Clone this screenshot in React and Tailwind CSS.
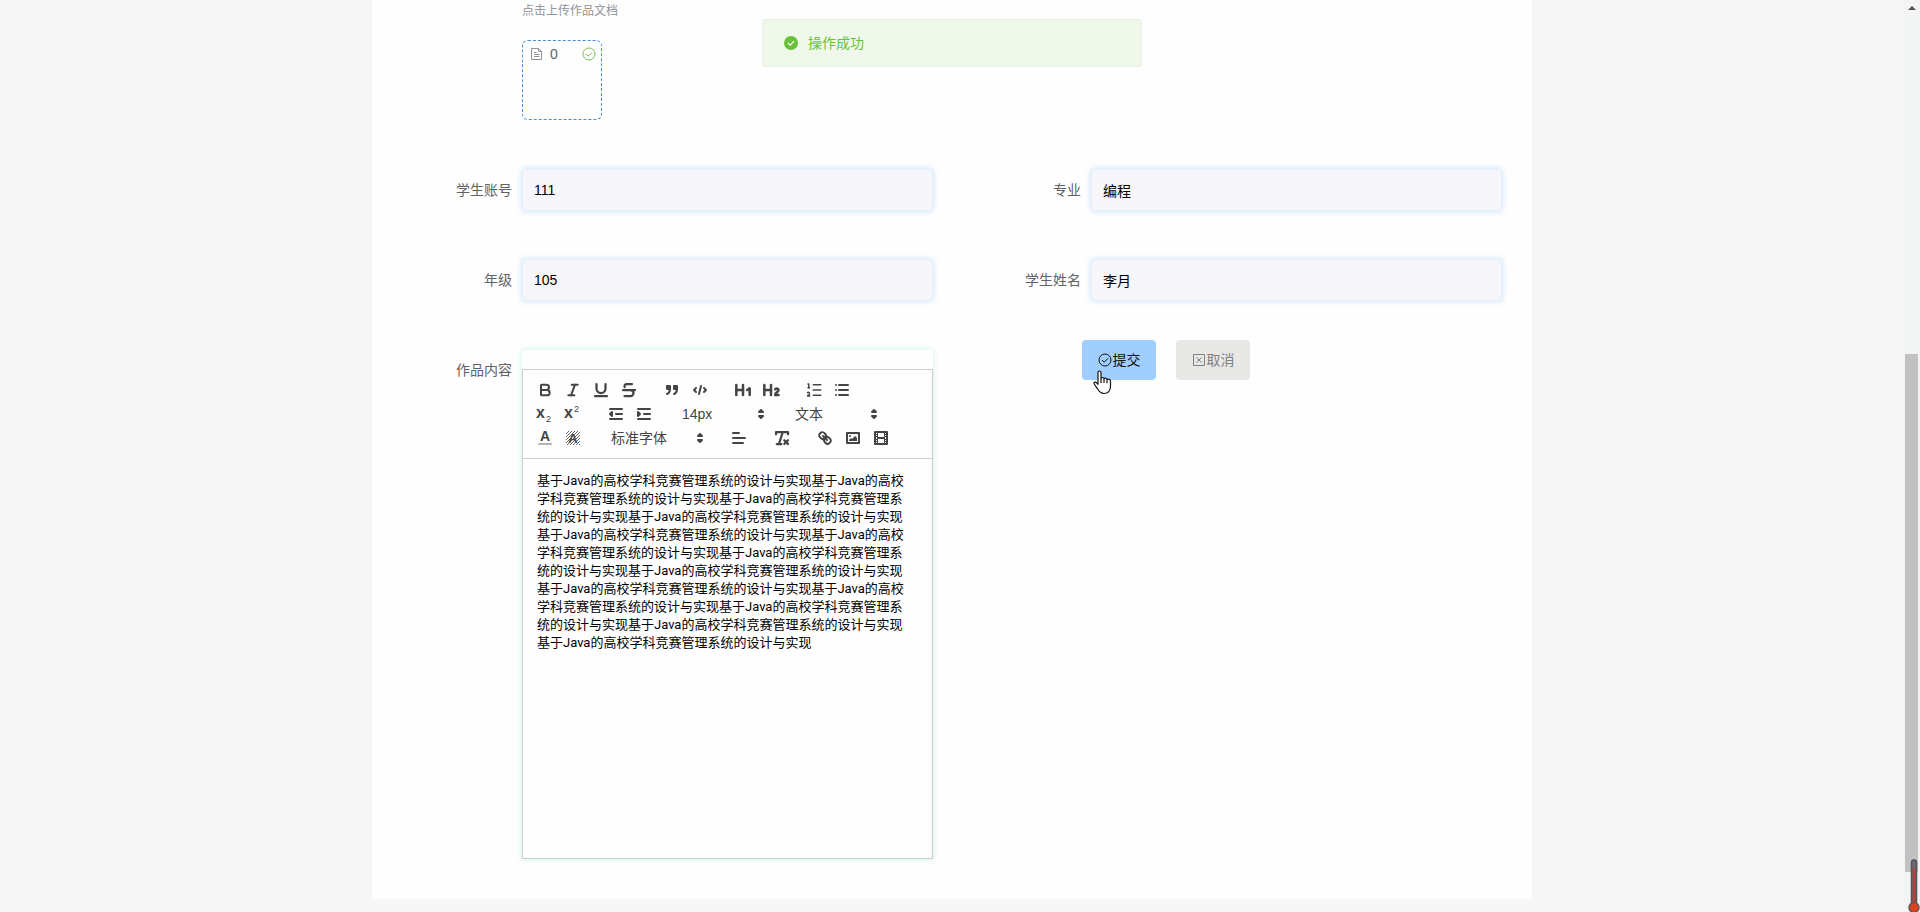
import { useState } from 'react';
import {
  Bold,
  Italic,
  Underline,
  Strikethrough,
  Heading1,
  Heading2,
  ListOrdered,
  RemoveFormatting,
} from 'lucide-react';

const sentence = '基于Java的高校学科竞赛管理系统的设计与实现';

const fields = [
  { id: 'account', label: '学生账号', value: '111' },
  { id: 'major', label: '专业', value: '编程' },
  { id: 'grade', label: '年级', value: '105' },
  { id: 'name', label: '学生姓名', value: '李月' },
];

function Glyph({ children }) {
  return (
    <svg
      viewBox="0 0 18 18"
      className="w-[18px] h-[18px]"
      fill="none"
      stroke="currentColor"
      strokeWidth="2"
      strokeLinecap="round"
      strokeLinejoin="round"
    >
      {children}
    </svg>
  );
}

const QuoteIcon = () => (
  <Glyph>
    <g fill="currentColor">
      <rect height="3" width="3" x="4" y="5" />
      <rect height="3" width="3" x="11" y="5" />
      <path d="M7,8c0,4.031-3,5-3,5" />
      <path d="M14,8c0,4.031-3,5-3,5" />
    </g>
  </Glyph>
);

const CodeIcon = () => (
  <Glyph>
    <polyline points="5 7 3 9 5 11" />
    <polyline points="13 7 15 9 13 11" />
    <line x1="10" x2="8" y1="5" y2="13" />
  </Glyph>
);

const BulletIcon = () => (
  <Glyph>
    <path d="M6 4h9M6 9h9M6 14h9M3 4h0M3 9h0M3 14h0" />
  </Glyph>
);

const SubIcon = () => (
  <Glyph>
    <g fill="currentColor" stroke="none">
      <text x="0" y="13" fontSize="16" fontWeight="700">x</text>
      <text x="10" y="17" fontSize="9">2</text>
    </g>
  </Glyph>
);

const SuperIcon = () => (
  <Glyph>
    <g fill="currentColor" stroke="none">
      <text x="0" y="13" fontSize="16" fontWeight="700">x</text>
      <text x="10" y="7" fontSize="9">2</text>
    </g>
  </Glyph>
);

const OutdentIcon = () => (
  <Glyph>
    <path d="M3 14h12M3 4h12M9 9h6" />
    <polyline fill="currentColor" points="5 7 5 11 3 9 5 7" />
  </Glyph>
);

const IndentIcon = () => (
  <Glyph>
    <path d="M3 14h12M3 4h12M9 9h6" />
    <polyline fill="currentColor" points="3 7 3 11 5 9 3 7" />
  </Glyph>
);

const ColorIcon = () => (
  <Glyph>
    <line x1="3" x2="15" y1="15" y2="15" opacity="0.4" />
    <text x="9" y="12" textAnchor="middle" fontSize="14" fontWeight="700" fill="currentColor" stroke="none">A</text>
  </Glyph>
);

const BackgroundIcon = () => (
  <Glyph>
    <path
      strokeWidth="1"
      strokeLinecap="butt"
      d="M2 5l3-3M2 8l6-6M2 11l9-9M2 14l12-12M3 16l13-13M6 16l10-10M9 16l7-7M12 16l4-4M15 16l1-1"
      opacity="0.8"
    />
    <text x="9" y="14" textAnchor="middle" fontSize="13" fontWeight="700" fill="currentColor" stroke="none">A</text>
  </Glyph>
);

const AlignIcon = () => (
  <Glyph>
    <path d="M3 9h12M3 14h10M3 4h6" />
  </Glyph>
);

const LinkIcon = () => (
  <Glyph>
    <line x1="7" x2="11" y1="7" y2="11" />
    <path d="M8.9,4.577a3.476,3.476,0,0,1,.36,4.679A3.476,3.476,0,0,1,4.577,8.9C3.185,7.5,2.035,6.4,4.217,4.217S7.5,3.185,8.9,4.577Z" />
    <path d="M13.423,9.1a3.476,3.476,0,0,0-4.679-.36,3.476,3.476,0,0,0,.36,4.679c1.392,1.392,2.5,2.542,4.679.36S14.815,10.5,13.423,9.1Z" />
  </Glyph>
);

const ImageIcon = () => (
  <Glyph>
    <rect height="10" width="12" x="3" y="4" />
    <circle cx="6" cy="7" r="1" fill="currentColor" stroke="none" />
    <polyline fill="currentColor" stroke="none" points="5 12 5 11 7 9 8 10 11 7 13 9 13 12 5 12" />
  </Glyph>
);

const VideoIcon = () => (
  <Glyph>
    <rect height="12" width="12" x="3" y="3" />
    <path fill="currentColor" stroke="none" d="M5 3h1v12H5zM12 3h1v12h-1zM5 8h8v2H5zM3 5h3v1H3zM3 7h3v1H3zM3 10h3v1H3zM3 12h3v1H3zM12 5h3v1h-3zM12 7h3v1h-3zM12 10h3v1h-3zM12 12h3v1h-3z" />
  </Glyph>
);

function CircleCheckIcon({ className }) {
  return (
    <svg viewBox="0 0 14 14" className={className} fill="none" stroke="currentColor">
      <circle cx="7" cy="7" r="6" />
      <path d="M4 7l2.2 2.2L10.2 5.2" />
    </svg>
  );
}

function Tool({ label, children }) {
  return (
    <button type="button" aria-label={label} className="w-7 h-6 flex items-center justify-center">
      {children}
    </button>
  );
}

function Group({ children }) {
  return <span className="flex mr-[15px]">{children}</span>;
}

function Picker({ label, value, width }) {
  return (
    <span className={`relative flex items-center h-6 ${width}`}>
      <select aria-label={label} className="appearance-none w-full h-6 pl-[9px] text-sm leading-6 outline-none">
        <option>{value}</option>
      </select>
      <span className="absolute right-px top-[3px] pointer-events-none">
        <Glyph>
          <polygon fill="currentColor" points="7 11 9 13 11 11 7 11" />
          <polygon fill="currentColor" points="7 7 9 5 11 7 7 7" />
        </Glyph>
      </span>
    </span>
  );
}

function Toolbar() {
  return (
    <div className="border border-[#ccc] p-2 text-[#444]">
      <div className="flex">
        <Group>
          <Tool label="Bold"><Bold size={16} strokeWidth={3} /></Tool>
          <Tool label="Italic"><Italic size={16} strokeWidth={3} /></Tool>
          <Tool label="Underline"><Underline size={18} strokeWidth={3} /></Tool>
          <Tool label="Strike"><Strikethrough size={18} strokeWidth={3} /></Tool>
        </Group>
        <Group>
          <Tool label="Quote"><QuoteIcon /></Tool>
          <Tool label="Code"><CodeIcon /></Tool>
        </Group>
        <Group>
          <Tool label="Heading 1"><Heading1 size={20} strokeWidth={3} /></Tool>
          <Tool label="Heading 2"><Heading2 size={20} strokeWidth={3} /></Tool>
        </Group>
        <Group>
          <Tool label="Ordered list"><ListOrdered size={18} strokeWidth={2} /></Tool>
          <Tool label="Bullet list"><BulletIcon /></Tool>
        </Group>
      </div>
      <div className="flex">
        <Group>
          <Tool label="Subscript"><SubIcon /></Tool>
          <Tool label="Superscript"><SuperIcon /></Tool>
        </Group>
        <Group>
          <Tool label="Outdent"><OutdentIcon /></Tool>
          <Tool label="Indent"><IndentIcon /></Tool>
        </Group>
        <Group>
          <Picker label="Size" value="14px" width="w-[98px]" />
        </Group>
        <Group>
          <Picker label="Header" value="文本" width="w-[98px]" />
        </Group>
      </div>
      <div className="flex">
        <Group>
          <Tool label="Color"><ColorIcon /></Tool>
          <Tool label="Background"><BackgroundIcon /></Tool>
        </Group>
        <Group>
          <Picker label="Font" value="标准字体" width="w-[108px]" />
        </Group>
        <Group>
          <Tool label="Align"><AlignIcon /></Tool>
        </Group>
        <Group>
          <Tool label="Clean"><RemoveFormatting size={18} strokeWidth={3} /></Tool>
        </Group>
        <Group>
          <Tool label="Link"><LinkIcon /></Tool>
          <Tool label="Image"><ImageIcon /></Tool>
          <Tool label="Video"><VideoIcon /></Tool>
        </Group>
      </div>
    </div>
  );
}

function Field({ id, label, value }) {
  const [text, setText] = useState(value);

  return (
    <div className="flex">
      <label htmlFor={id} className="w-[120px] pr-[10px] shrink-0 text-right text-sm leading-[42px] text-[#606266]">
        {label}
      </label>
      <input
        id={id}
        type="text"
        value={text}
        onChange={(e) => setText(e.target.value)}
        className="flex-1 min-w-0 h-[42px] px-[11px] rounded text-sm text-black bg-[#f6f6fb] outline-none border border-[#e6f0fb] shadow-[0_0_6px_rgba(64,158,255,0.3)]"
      />
    </div>
  );
}

function Message() {
  return (
    <div role="alert" className="absolute top-[19px] left-1/2 -translate-x-1/2 w-[380px] h-12 px-[21px] flex items-center gap-[10px] rounded bg-[#f0f8eb] border border-[#e6f0dc] text-[#67c23a]">
      <svg viewBox="0 0 14 14" className="w-[14px] h-[14px]">
        <circle cx="7" cy="7" r="7" fill="currentColor" />
        <path d="M4 7l2.2 2.2L10.2 5.2" fill="none" stroke="#fff" strokeWidth="1.2" />
      </svg>
      <p className="text-sm">操作成功</p>
    </div>
  );
}

function UploadCard() {
  return (
    <div className="pl-[120px]">
      <p className="text-xs leading-[22px] text-[#909399]">点击上传作品文档</p>
      <div className="mt-[18px] w-20 h-20 pl-[7px] pr-[5px] pt-1 rounded-md border border-dashed border-[#4a8bdb] text-[#606266]">
        <div className="flex items-center h-[18px]">
          <svg viewBox="0 0 14 14" className="w-[14px] h-[14px] text-[#909399]" fill="none" stroke="currentColor">
            <path d="M1.5 1.5h7l3 3v8h-10zM8.5 1.5v3h3M4 5.5h2.5M4 7.5h5.5M4 9.5h5.5" />
          </svg>
          <span className="ml-[6px] text-sm leading-[18px]">0</span>
          <CircleCheckIcon className="ml-auto w-[14px] h-[14px] text-[#7fbf5a]" />
        </div>
      </div>
    </div>
  );
}

function ScrollRail() {
  return (
    <div className="relative w-4 shrink-0 flex flex-col bg-[#f3f4f4]">
      <svg viewBox="0 0 16 17" className="w-4 h-[17px]">
        <path d="M4 10l4-4 4 4z" fill="#505050" />
      </svg>
      <div className="flex-[337]" />
      <div className="flex-[518] ml-px mr-[2px] bg-[#c1c1c1]" />
      <div className="flex-[40]" />
      <svg viewBox="0 0 12 53" className="absolute right-0 bottom-0 w-3 h-[53px]">
        <rect x="3.5" y="1" width="5" height="46" rx="2.5" fill="#6b6b78" stroke="#505256" strokeWidth="1.5" />
        <rect x="4.5" y="9" width="3" height="38" fill="#a8443c" />
        <circle cx="6" cy="48.5" r="5" fill="#e0401c" stroke="#5d5a58" strokeWidth="1.5" />
      </svg>
    </div>
  );
}

function HandCursor() {
  return (
    <svg viewBox="0 0 19 25" className="absolute left-[11px] top-[30px] w-[19px] h-[25px] pointer-events-none">
      <path
        d="M5 2.5C5 .5 8 .5 8 2.500V8.500C8.500 7 11 7.200 11 9C11.600 7.700 14 8 14 9.800C14.800 8.700 17.500 9 17.500 11V16C17.500 21 15 23.500 11 23.500C7.500 23.500 6 21.500 4.500 18.800L1.200 14C.5 12.600 2.200 11.500 3.500 12.700L5 14.300ZM8 8.500v4.500M11 9v4M14 9.800v3.500"
        fill="#fff"
        stroke="#111"
        strokeWidth="1.2"
        strokeLinejoin="round"
      />
    </svg>
  );
}

export default function App() {
  const [content, setContent] = useState(sentence.repeat(13));

  return (
    <div className="flex min-h-screen bg-[#f6f6f6] font-['Liberation_Sans','Noto_Sans_CJK_SC',sans-serif]">
      <main className="relative flex-1 min-w-0">
        <form onSubmit={(e) => e.preventDefault()} className="max-w-[1160px] mx-auto px-[30px] pb-10 bg-[#fefefe]">
          <UploadCard />

          <div className="mt-[49px] grid grid-cols-2 gap-x-[38px] gap-y-12">
            {fields.map((field) => (
              <Field key={field.id} {...field} />
            ))}
          </div>

          <div className="mt-[39px] grid grid-cols-2 gap-x-[38px]">
            <div className="flex pt-[10px]">
              <label htmlFor="content" className="w-[120px] pr-[10px] shrink-0 text-right text-sm leading-10 text-[#606266]">
                作品内容
              </label>
              <div className="flex-1 min-w-0 pt-[19px] shadow-[0_0_6px_rgba(64,220,170,0.3)]">
                <Toolbar />
                <textarea
                  id="content"
                  value={content}
                  onChange={(e) => setContent(e.target.value)}
                  className="block w-full h-[400px] pl-[14px] pr-[17px] pt-[13px] resize-none overflow-hidden outline-none border border-t-0 border-[#ccc] text-[13px] leading-[18px] text-black font-[Roboto,'Noto_Sans_CJK_SC',sans-serif]"
                />
              </div>
            </div>

            <div className="flex items-start gap-5 pl-[111px]">
              <button type="submit" className="relative w-[74px] h-10 flex items-center justify-center gap-px rounded bg-[#a0cfff] text-sm text-[#111]">
                <CircleCheckIcon className="w-[14px] h-[14px]" />
                提交
                <HandCursor />
              </button>
              <button type="button" className="w-[74px] h-10 flex items-center justify-center gap-px rounded bg-[#e8e8e7] text-sm text-[#7f807f]">
                <svg viewBox="0 0 14 14" className="w-[14px] h-[14px]" fill="none" stroke="currentColor">
                  <path d="M1.500 1.500h11v11h-11zM4.500 4.500l5 5M9.500 4.500l-5 5" />
                </svg>
                取消
              </button>
            </div>
          </div>
        </form>
        <Message />
      </main>
      <ScrollRail />
    </div>
  );
}
